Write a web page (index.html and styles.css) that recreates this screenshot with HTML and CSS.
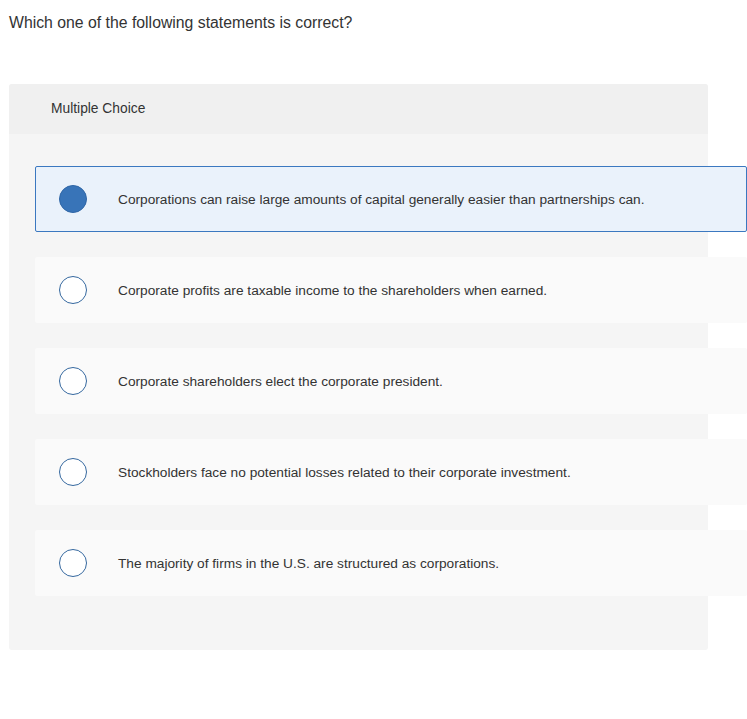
FILE: index.html
```html
<!DOCTYPE html>
<html lang="en">
<head>
    <meta charset="UTF-8">
    <title>Multiple Choice</title>
    <link rel="stylesheet" href="styles.css">
</head>
<body>
    <p class="question">Which one of the following statements is correct?</p>

    <div class="panel">
        <div class="panel-head">Multiple Choice</div>
        <div class="panel-body">
            <div class="option selected">
                <span class="radio"></span>
                <span class="label">Corporations can raise large amounts of capital generally easier than partnerships can.</span>
            </div>
            <div class="option">
                <span class="radio"></span>
                <span class="label">Corporate profits are taxable income to the shareholders when earned.</span>
            </div>
            <div class="option">
                <span class="radio"></span>
                <span class="label">Corporate shareholders elect the corporate president.</span>
            </div>
            <div class="option">
                <span class="radio"></span>
                <span class="label">Stockholders face no potential losses related to their corporate investment.</span>
            </div>
            <div class="option">
                <span class="radio"></span>
                <span class="label">The majority of firms in the U.S. are structured as corporations.</span>
            </div>
        </div>
    </div>
</body>
</html>
```

FILE: styles.css
```css
html {
    overflow: hidden;
}
body {
    margin: 0;
    font-family: 'Liberation Sans', Arial, sans-serif;
    color: #333;
    background: #fff;
}
.question {
    margin: 0;
    padding: 13px 9px 0;
    font-size: 15.8px;
    line-height: 19px;
    height: 71px;
}
.panel {
    margin-left: 9px;
    width: 699px;
    background: #f5f5f5;
    border-radius: 3px;
}
.panel-head {
    background: #f0f0f0;
    height: 50px;
    line-height: 50px;
    padding-left: 42px;
    font-size: 13.8px;
    border-radius: 3px 3px 0 0;
}
.panel-body {
    padding: 32px 0 54px 26px;
}
.option {
    display: flex;
    align-items: center;
    width: 712px;
    height: 66px;
    box-sizing: border-box;
    padding-left: 24px;
    margin-bottom: 25px;
    background: #fafafa;
    border-radius: 2px;
}
.option:last-child {
    margin-bottom: 0;
}
.option.selected {
    background: #eaf2fb;
    border: 1px solid #3b78c0;
    padding-left: 23px;
}
.radio {
    width: 28px;
    height: 28px;
    box-sizing: border-box;
    border-radius: 50%;
    border: 1.5px solid #35689f;
    background: #fff;
    flex: none;
}
.selected .radio {
    background: #3874b8;
    border-color: #2f66a6;
}
.label {
    margin-left: 31px;
    font-size: 13.7px;
    color: #333;
}
```
